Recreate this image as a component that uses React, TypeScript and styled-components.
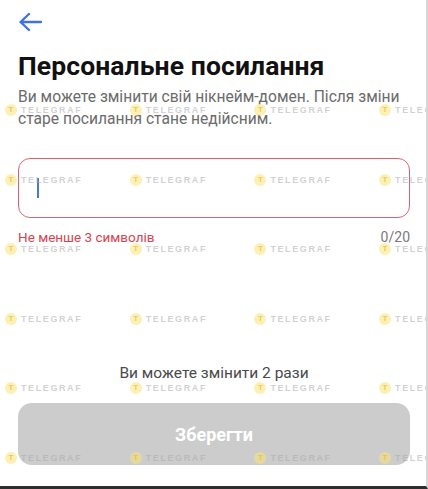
import React, { useState } from 'react';
import styled, { createGlobalStyle } from 'styled-components';

const GlobalStyle = createGlobalStyle`
  html, body {
    margin: 0;
    padding: 0;
    background: #ffffff;
  }
  body {
    font-family: Roboto, "Noto Sans", "Liberation Sans", sans-serif;
    -webkit-font-smoothing: antialiased;
  }
`;

const Screen = styled.div`
  position: relative;
  width: 392px;
  height: 486px;
  background: #ffffff;
  border-right: 2px solid #d6d6d6;
  border-bottom: 3px solid #2e2e2e;
  overflow: hidden;
  display: flex;
  flex-direction: column;
  padding: 0 16px 0 18px;
  box-sizing: content-box;
`;

const BackButton = styled.button`
  width: 28px;
  height: 28px;
  margin: 8px 0 0 0;
  padding: 0;
  border: 0;
  background: none;
  display: flex;
  align-items: center;
  cursor: pointer;
`;

const Title = styled.h1`
  margin: 14px 0 0;
  font-size: 26.5px;
  line-height: 32px;
  font-weight: 700;
  color: #111111;
  letter-spacing: 0.1px;
`;

const Description = styled.p`
  margin: 4px 0 0;
  font-size: 15.6px;
  line-height: 22px;
  color: #6b6b6b;
`;

const InputBox = styled.div`
  margin-top: 28px;
  height: 58px;
  border: 1px solid #d9646e;
  border-radius: 12px;
  display: flex;
  align-items: center;
  padding: 0 18px;
`;

const Field = styled.input`
  flex: 1;
  border: 0;
  outline: none;
  font-family: inherit;
  font-size: 18px;
  color: #111111;
  caret-color: #4a78d8;
  background: transparent;
  padding: 0;
`;

const Caret = styled.span`
  width: 2px;
  height: 20px;
  background: #4a78d8;
`;

const HelperRow = styled.div`
  margin-top: 11px;
  display: flex;
  justify-content: space-between;
  font-size: 13.5px;
  line-height: 16px;
`;

const ErrorText = styled.span`
  color: #d9434f;
`;

const Counter = styled.span`
  color: #7a7a7a;
  font-size: 14px;
`;

const Spacer = styled.div`
  flex: 1;
`;

const Hint = styled.p`
  margin: 0 0 19px;
  text-align: center;
  font-size: 15.5px;
  line-height: 22px;
  color: #4a4a4a;
`;

const SaveButton = styled.button<{ $active: boolean }>`
  height: 62px;
  margin-bottom: 21px;
  border: 0;
  border-radius: 14px;
  background: ${(p) => (p.$active ? '#3d74e0' : '#cccccc')};
  color: #ffffff;
  font-family: inherit;
  font-size: 18px;
  font-weight: 700;
`;

const WatermarkLayer = styled.div`
  position: absolute;
  inset: 0;
  pointer-events: none;
  display: grid;
  grid-template-columns: repeat(4, 124.7px);
  grid-auto-rows: 69.6px;
  padding: 104px 0 0 5px;
  box-sizing: border-box;
`;

const Mark = styled.div`
  display: flex;
  align-items: center;
  gap: 4px;
  height: 12px;
`;

const MarkDot = styled.span`
  width: 12px;
  height: 12px;
  border-radius: 50%;
  background: rgba(250, 228, 120, 0.55);
  color: rgba(225, 185, 60, 0.7);
  font-size: 8px;
  font-weight: 700;
  line-height: 12px;
  text-align: center;
  font-family: "Liberation Sans", sans-serif;
`;

const MarkText = styled.span`
  font-family: "Liberation Sans", sans-serif;
  font-size: 9px;
  font-weight: 700;
  letter-spacing: 1.6px;
  color: rgba(170, 170, 170, 0.55);
`;

const ArrowIcon = () => (
  <svg width="24" height="20" viewBox="0 0 24 20" fill="none">
    <path
      d="M23 10H3M11 2L2.5 10L11 18"
      stroke="#3d74e0"
      strokeWidth="2.4"
      strokeLinecap="round"
      strokeLinejoin="round"
    />
  </svg>
);

const App: React.FC = () => {
  const [value, setValue] = useState('');
  const marks = Array.from({ length: 24 });

  return (
    <>
      <GlobalStyle />
      <Screen>
        <BackButton aria-label="Назад">
          <ArrowIcon />
        </BackButton>
        <Title>Персональне посилання</Title>
        <Description>
          Ви можете змінити свій нікнейм-домен. Після зміни старе посилання
          стане недійсним.
        </Description>
        <InputBox>
          {value === '' && <Caret />}
          <Field value={value} maxLength={20} onChange={(e) => setValue(e.target.value)} />
        </InputBox>
        <HelperRow>
          <ErrorText>Не менше 3 символів</ErrorText>
          <Counter>{value.length}/20</Counter>
        </HelperRow>
        <Spacer />
        <Hint>Ви можете змінити 2 рази</Hint>
        <SaveButton $active={value.length >= 3}>Зберегти</SaveButton>
        <WatermarkLayer>
          {marks.map((_, i) => (
            <Mark key={i}>
              <MarkDot>T</MarkDot>
              <MarkText>TELEGRAF</MarkText>
            </Mark>
          ))}
        </WatermarkLayer>
      </Screen>
    </>
  );
};

export default App;
